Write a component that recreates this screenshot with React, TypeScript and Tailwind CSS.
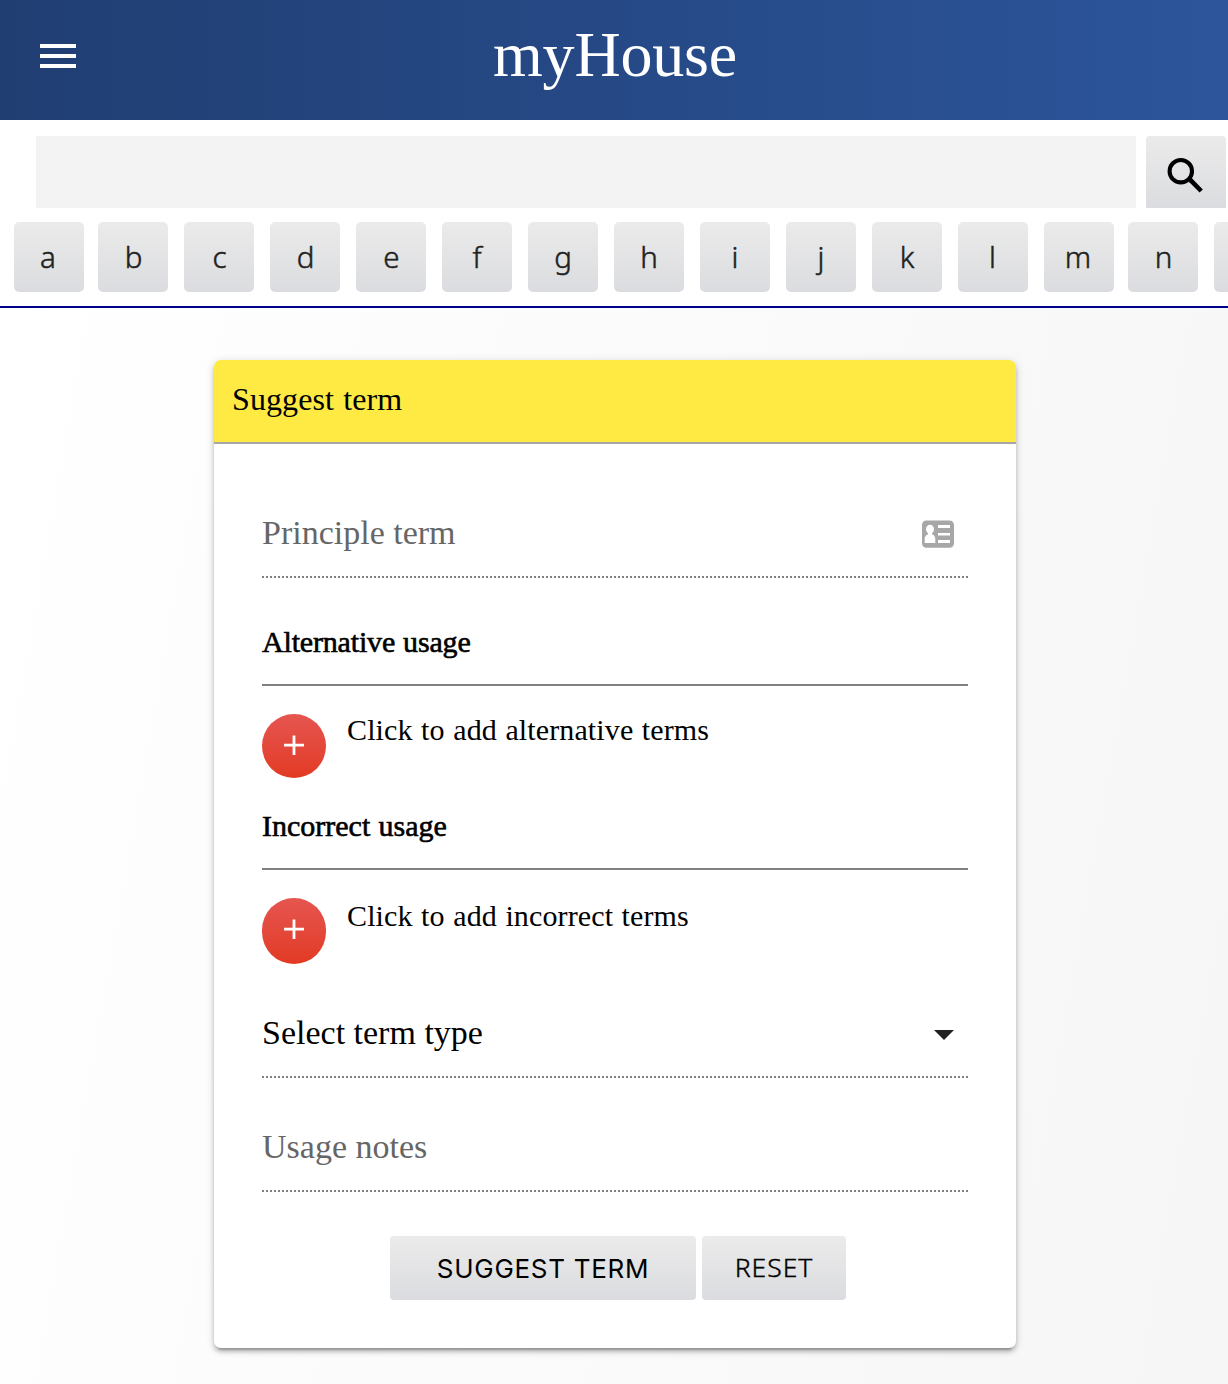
import type { ReactNode } from "react";

const LETTERS = [
  { char: "a", gap: "ml-[14px] pr-[2px]" },
  { char: "b", gap: "ml-[14px] pl-px" },
  { char: "c", gap: "ml-4 pl-px" },
  { char: "d", gap: "ml-4 pl-px" },
  { char: "e", gap: "ml-4 pl-px" },
  { char: "f", gap: "ml-4" },
  { char: "g", gap: "ml-4" },
  { char: "h", gap: "ml-4" },
  { char: "i", gap: "ml-4" },
  { char: "j", gap: "ml-4" },
  { char: "k", gap: "ml-4" },
  { char: "l", gap: "ml-4 pr-px" },
  { char: "m", gap: "ml-4 pr-[2px]" },
  { char: "n", gap: "ml-[14px] pl-px" },
  { char: "", gap: "ml-4" },
];

function Header() {
  return (
    <header className="grid h-[120px] grid-cols-[1fr_auto_1fr] bg-linear-to-r from-[#203e72] to-[#2c559b] text-white">
      <button aria-label="Menu" className="mt-11 ml-10 flex h-6 w-9 flex-col justify-between">
        <span className="h-1 w-9 bg-white" />
        <span className="h-1 w-9 bg-white" />
        <span className="h-1 w-9 bg-white" />
      </button>
      <h1 className="pt-[17px] pl-[2px] text-[64px] leading-[76px] tracking-[-0.2px]">myHouse</h1>
      <span />
    </header>
  );
}

function SearchBar() {
  return (
    <div className="flex h-[102px] pt-4 pl-9">
      <input aria-label="Search" className="h-[72px] w-[1100px] bg-[#f3f3f3]" />
      <button
        aria-label="Search"
        className="ml-[10px] h-[72px] w-20 rounded-t-[4px] bg-linear-to-b from-[#ebebeb] to-[#dbdcdf]"
      >
        <svg viewBox="0 0 80 72" className="h-[72px] w-20" fill="none" stroke="#000">
          <circle cx="34.8" cy="35.2" r="11.2" strokeWidth="4.1" />
          <path d="M43.4 44.2l1.6 .4 10.2 10.4" strokeWidth="4.6" />
        </svg>
      </button>
    </div>
  );
}

function LetterBar() {
  return (
    <nav className="flex h-[86px] overflow-hidden border-b-2 border-[#00008b]">
      {LETTERS.map(({ char, gap }, index) => (
        <button
          key={index}
          className={`${gap} h-[70px] w-[70px] shrink-0 rounded-[5px] bg-linear-to-b from-[#ebebeb] to-[#dbdcdf] text-center font-['Noto_Sans',sans-serif] text-[29.5px] leading-[69px] font-light text-[#212121] [-webkit-text-stroke:0.5px_#212121]`}
        >
          <span className="block h-[70px]">{char}</span>
        </button>
      ))}
    </nav>
  );
}

function DottedRule() {
  return (
    <div className="h-[2px] bg-[repeating-linear-gradient(90deg,#808080_0_2px,transparent_2px_4px)]" />
  );
}

function AddRow({ children, tall }: { children: ReactNode; tall?: boolean }) {
  return (
    <div className="flex pt-7">
      <button
        aria-label="Add"
        className={`${tall ? "h-[66px]" : "h-16"} flex w-16 shrink-0 items-start rounded-full bg-linear-to-b from-[#e5554f] to-[#e23a22]`}
      >
        <svg viewBox="0 0 64 64" className="h-16 w-16" stroke="#fff" strokeWidth="2.8">
          <path d="M22 31.2h20M32 21.4v19.6" />
        </svg>
      </button>
      <p
        className={`${tall ? "pt-px" : ""} ml-[21px] text-[30px] leading-[34px] tracking-[0.12px] [word-spacing:0.9px]`}
      >
        <span className={tall ? "block" : "-mt-px block"}>{children}</span>
      </p>
    </div>
  );
}

function GroupTitle({ children, tight }: { children: ReactNode; tight?: boolean }) {
  return (
    <h3
      className={`${tight ? "tracking-[-0.17px]" : ""} h-[60px] border-b-2 border-[#808080] text-[30px] leading-[32px] [word-spacing:0.7px] [-webkit-text-stroke:0.6px_#000]`}
    >
      {children}
    </h3>
  );
}

function ContactCardIcon() {
  return (
    <svg viewBox="0 0 32 28" className="h-7 w-8">
      <rect y="0.4" width="32" height="27.4" rx="4.5" fill="#a7a7a7" />
      <g fill="#fff">
        <ellipse cx="8" cy="9.2" rx="4" ry="4.4" />
        <path d="M6 12.5h4v1.7c2.4.8 3.3 2.6 3.3 5V23H2.7v-3.8c0-2.4.9-4.2 3.3-5z" />
        <path d="M16 5h12v3H16zM16 13h12v2.5H16zM16 20h12v3H16z" />
      </g>
    </svg>
  );
}

function SuggestCard() {
  return (
    <section className="mx-auto mt-[52px] h-[988px] w-[802px] translate-x-px rounded-[7px] bg-white shadow-[0_4px_4px_rgba(0,0,0,0.18),0_6px_2px_-4px_rgba(0,0,0,0.2),0_2px_10px_rgba(0,0,0,0.16)]">
      <h2 className="h-[84px] rounded-t-[7px] border-b-2 border-[#a7a7a7] bg-[#ffe943] pl-[18px] text-[32px] leading-[78px] tracking-[0.1px] [word-spacing:1px]">
        Suggest term
      </h2>
      <form className="px-12">
        <div className="flex h-[132px] justify-between pt-[69px] pr-[14px]">
          <span className="text-[34px] leading-[40px] text-[#666]">Principle term</span>
          <span className="pt-[7px]">
            <ContactCardIcon />
          </span>
        </div>
        <DottedRule />
        <div className="pt-12">
          <GroupTitle tight>Alternative usage</GroupTitle>
        </div>
        <AddRow>Click to add alternative terms</AddRow>
        <div className="pt-8">
          <GroupTitle>Incorrect usage</GroupTitle>
        </div>
        <AddRow tall>Click to add incorrect terms</AddRow>
        <div className="flex h-28 justify-between pt-[49px] pr-[14px]">
          <span className="text-[34px] leading-[40px]">Select term type</span>
          <svg viewBox="0 0 20 10" className="mt-[17px] h-[10px] w-5" fill="#212121">
            <path d="M0 0h20L10 10z" />
          </svg>
        </div>
        <DottedRule />
        <div className="h-28 pt-[49px]">
          <span className="block text-[34px] leading-[40px] text-[#666]">Usage notes</span>
        </div>
        <DottedRule />
        <div className="mt-11 ml-32 flex gap-[6px]">
          <button
            type="button"
            className="h-16 w-[306px] rounded-[4px] bg-linear-to-b from-[#ebebeb] to-[#dbdcdf] font-['Inter',sans-serif] text-[26px] tracking-[0.7px]"
          >
            SUGGEST TERM
          </button>
          <button
            type="button"
            className="h-16 w-36 rounded-[4px] bg-linear-to-b from-[#ebebeb] to-[#dbdcdf] pb-px font-['Noto_Sans',sans-serif] text-[26.5px] font-light tracking-[1px] [-webkit-text-stroke:0.4px_#000]"
          >
            RESET
          </button>
        </div>
      </form>
    </section>
  );
}

export default function App() {
  return (
    <div className="h-[1384px] w-[1228px] overflow-hidden bg-white font-['Liberation_Serif',serif] text-black">
      <Header />
      <SearchBar />
      <LetterBar />
      <main className="flow-root h-[1076px] bg-[linear-gradient(100deg,#fff_0%,#f6f6f6_100%)]">
        <SuggestCard />
      </main>
    </div>
  );
}
